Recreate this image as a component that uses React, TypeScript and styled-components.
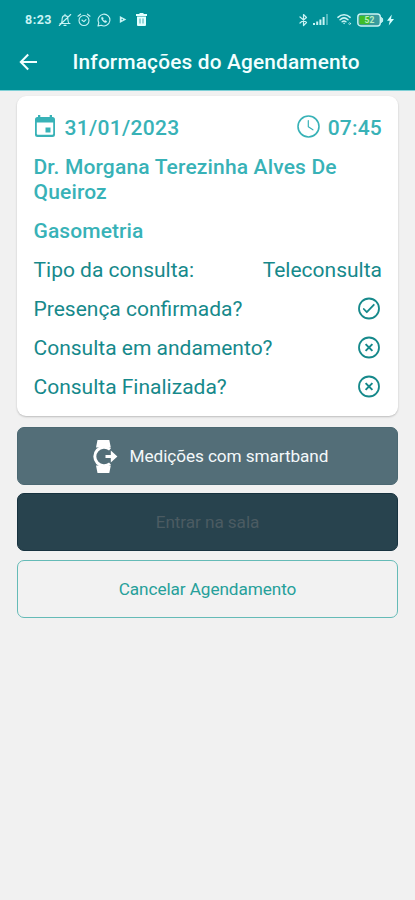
import React from "react";
import styled, { createGlobalStyle } from "styled-components";

const GlobalStyle = createGlobalStyle`
  * { box-sizing: border-box; }
  body { margin: 0; background: #f1f1f1; font-family: Roboto, "Liberation Sans", sans-serif; }
`;

const Screen = styled.main`
  height: 900px;
  background: #f1f1f1;
  overflow: hidden;
`;

const Header = styled.header`
  height: 91px;
  background: #009097;
  border-bottom: 1px solid #7fd0d6;
  color: #f2ffff;
`;

const StatusBar = styled.div`
  height: 39px;
  padding: 0 21px 0 25px;
  display: flex;
  justify-content: space-between;
  align-items: center;
  color: #c9f3f4;
`;

const StatusGroup = styled.div<{ $gap: number }>`
  display: flex;
  align-items: center;
  gap: ${(p) => p.$gap}px;
`;

const StatusItem = styled.span<{ $before?: number; $after?: number }>`
  display: flex;
  margin-left: ${(p) => p.$before ?? 0}px;
  margin-right: ${(p) => p.$after ?? 0}px;
`;

const Clock = styled.span`
  font-size: 12.5px;
  font-weight: 700;
  letter-spacing: 0.5px;
  width: 28px;
`;

const TitleBar = styled.div`
  height: 51px;
  padding: 0 0 6px 19px;
  display: flex;
  align-items: center;
`;

const Title = styled.h1`
  margin: 1px 0 0 34.5px;
  font-size: 20.8px;
  line-height: 26px;
  font-weight: 500;
  letter-spacing: 0.19px;
  white-space: nowrap;
`;

const Content = styled.div`
  padding: 5px 17px 0;
`;

const Card = styled.section`
  height: 320px;
  padding: 20px 16px 0 16.5px;
  background: #fff;
  border-radius: 9px;
  box-shadow: 0 1px 2px rgba(0, 0, 0, 0.22);
  color: #16898b;
`;

const Row = styled.div<{ $before?: number }>`
  height: 24px;
  margin-top: ${(p) => p.$before ?? 14.9}px;
  display: flex;
  align-items: center;
  justify-content: space-between;
  font-size: 21px;
  line-height: 24px;
  white-space: nowrap;
  > svg { margin-right: 2px; }
`;

const DateTime = styled.span<{ $gap: number; $track: number }>`
  display: flex;
  align-items: center;
  gap: ${(p) => p.$gap}px;
  color: #38b2b7;
  font-weight: 500;
  letter-spacing: ${(p) => p.$track}px;
  svg { position: relative; top: -2px; }
`;

const Strong = styled.p<{ $before: number; $track: number }>`
  margin: ${(p) => p.$before}px 0 0;
  color: #38b2b7;
  font-size: 21px;
  line-height: 24.5px;
  font-weight: 500;
  letter-spacing: ${(p) => p.$track}px;
  white-space: nowrap;
`;

const Label = styled.span`
  letter-spacing: 0;
`;

const Actions = styled.div`
  margin-top: 11px;
  display: grid;
  gap: 8.3px;
`;

const Button = styled.button<{ $kind: "band" | "enter" | "cancel" }>`
  height: 58px;
  padding: 0 0 0 ${(p) => (p.$kind === "band" ? 5 : 0)}px;
  display: flex;
  align-items: center;
  justify-content: center;
  gap: 12px;
  border-radius: 7px;
  font: 400 17.2px/24px Roboto, sans-serif;
  letter-spacing: -0.08px;
  border: 1px solid ${(p) => ({ band: "#4b6872", enter: "#17323f", cancel: "#65bbb7" })[p.$kind]};
  background: ${(p) => ({ band: "#536e78", enter: "#28434e", cancel: "#f2f2f2" })[p.$kind]};
  color: ${(p) => ({ band: "#f3f8fa", enter: "#4b5b62", cancel: "#26a09a" })[p.$kind]};
`;

const stroke = { fill: "none", stroke: "currentColor", strokeLinecap: "round", strokeLinejoin: "round" } as const;

const MutedBell = () => (
  <svg width="14" height="14" viewBox="0 0 14 14" {...stroke} strokeWidth="1.1">
    <path d="M2 10.5h10M3.2 10.2c1-1 .8-3 1-4.8.3-1.900 1.300-2.800 2.800-2.800s2.600 1 2.800 2.800c.2 2 .1 3.800 1.100 4.800M6 12.400h2M7 1.300v1.200M1.300 12.500 12.700 1.500" />
  </svg>
);
const Alarm = () => (
  <svg width="14" height="14" viewBox="0 0 14 14" {...stroke} strokeWidth="1.1">
    <circle cx="7" cy="7.500" r="5" />
    <path d="M1 3.200 3.500 1.200M13 3.200l-2.500-2M4.900 7l2 1.700L9 6.600" />
  </svg>
);
const Chat = () => (
  <svg width="14" height="14" viewBox="0 0 14 14" {...stroke} strokeWidth="1.1">
    <path d="m1 13 .8-3.200A5.900 5.900 0 1 1 4.200 12.200z" />
    <path d="M4.800 4.300c-.8.700-.2 2.200 1.100 3.600s3 2.100 3.700 1.200l-.1-1-1.300-.5-.7.500-1.700-1.700.5-.7-.5-1.300z" fill="currentColor" strokeWidth=".5" />
  </svg>
);
const Play = () => (
  <svg width="8" height="9" viewBox="0 0 8 9"><path d="M.8 1 7.300 4.500.8 8z" fill="currentColor" /><circle cx="3.200" cy="4.500" r=".8" fill="#169ba0" /></svg>
);
const Trash = () => (
  <svg width="11" height="13" viewBox="0 0 11 13">
    <path d="M3.500 0h4v1H11v1.900H0V1h3.500zM1 3.500h9v8.200c0 .8-.5 1.300-1.300 1.300H2.300c-.8 0-1.300-.5-1.300-1.300z" fill="#e3ffff" />
    <path d="M4 5.500v5M7 5.500v5" stroke="#199ba0" strokeWidth=".8" />
  </svg>
);
const Bluetooth = () => (
  <svg width="9" height="14" viewBox="0 0 9 14" {...stroke} strokeWidth="1.200"><path d="m1 4 6.500 5.500-3 3V1.500l3 3L1 10" /></svg>
);
const Signal = () => (
  <svg width="16" height="11" viewBox="0 0 16 11" fill="currentColor">
    <path d="M0 9h2v2H0zM3.200 7.500h2V11h-2zM6.400 5.500h2V11h-2zM9.600 3h2v8h-2z" /><path d="M13 0h2v11h-2z" opacity=".4" />
  </svg>
);
const Wifi = () => (
  <svg width="15" height="13" viewBox="0 0 16 13" {...stroke} strokeWidth="1.600">
    <path d="M1 4.200c3.800-3.600 9.200-3.600 13 0M3.300 6.700c2.500-2.300 5.900-2.300 8.400 0M5.500 8.900c1.200-1 2.800-1 4 0" /><path d="m7.500 10.500.1.100" /><circle cx="13.500" cy="10.900" r="1" strokeWidth=".7" />
  </svg>
);
const Battery = () => (
  <svg width="27" height="14" viewBox="0 0 27 14">
    <rect x=".8" y="1" width="22.500" height="12" rx="3" fill="#399b9d" stroke="#c9f3f4" strokeWidth="1.400" />
    <path d="M3.500 2.700h9v8.600h-9a1 1 0 0 1-1-1V3.700a1 1 0 0 1 1-1z" fill="#3fbd28" />
    <path d="M24.300 4.500c1.900 0 1.900 5 0 5z" fill="#c9f3f4" stroke="#c9f3f4" />
    <text x="7.500" y="10.100" fontFamily="Roboto" fontSize="8.500" fontWeight="700" fill="#b9efc0">52</text>
  </svg>
);
const Bolt = () => (
  <svg width="7" height="12" viewBox="0 0 7 12"><path d="M4.800.5 0 6.800h2.800L1.700 11.500 7 4.900H4z" fill="#d8ffff" /></svg>
);
const BackArrow = () => (
  <svg width="19" height="18" viewBox="0 0 19 18" {...stroke} strokeWidth="2" strokeLinecap="butt" strokeLinejoin="miter"><path d="M18 9H2.200M9.200 1.500 1.800 9l7.400 7.500" /></svg>
);
const Calendar = () => (
  <svg width="22" height="23" viewBox="0 0 22 23" fill="currentColor">
    <path fillRule="evenodd" d="M4 0h2.300v2h9.400V0H18v2h.5A2.500 2.500 0 0 1 21 4.500v15a2.500 2.500 0 0 1-2.500 2.500h-15A2.500 2.500 0 0 1 1 19.500v-15A2.500 2.500 0 0 1 3.500 2H4zm-1.200 7.500v11.200a1 1 0 0 0 1 1h14.400a1 1 0 0 0 1-1V7.500z" />
    <path d="M11.500 12.500h5v5h-5z" />
  </svg>
);
const TimeIcon = () => (
  <svg width="23" height="23" viewBox="0 0 23 23" {...stroke} strokeWidth="1.600"><circle cx="11.500" cy="11.500" r="10.500" /><path d="M11.300 5.500v6.300l4.600 3" strokeWidth="1.200" /></svg>
);
const Result = ({ confirmed = false }: { confirmed?: boolean }) => (
  <svg width="22" height="23" viewBox="0 0 22 23" {...stroke} strokeWidth="1.800">
    <circle cx="11" cy="11.500" r="10" />
    {confirmed ? <path d="m5.800 12 3 3.200 7-7.400" /> : <path d="m7.600 8.100 6.800 6.800m0-6.800-6.800 6.800" strokeLinecap="butt" strokeWidth="2" />}
  </svg>
);
const Watch = () => (
  <svg width="26" height="33" viewBox="0 0 26 33" fill="none">
    <path d="M5.500 0h11.800l1.500 7.500H4zM4 25.500h14.800L17.300 33H5.500z" fill="#fff" />
    <circle cx="11.300" cy="16.500" r="9.300" fill="#536e78" />
    <path d="M18 9.300A9.300 9.300 0 1 0 18 23.700" stroke="#fff" strokeWidth="3" />
    <path d="M13.500 15h5.300v-4.600l6.600 6.100-6.600 6.100V18h-5.300z" fill="#fff" />
  </svg>
);

export default function App() {
  return (
    <Screen>
      <GlobalStyle />
      <Header>
        <StatusBar>
          <StatusGroup $gap={5.2}>
            <Clock>8:23</Clock><MutedBell /><Alarm /><Chat />
            <StatusItem $before={3.5}><Play /></StatusItem>
            <StatusItem $before={3.5}><Trash /></StatusItem>
          </StatusGroup>
          <StatusGroup $gap={5}>
            <Bluetooth /><Signal />
            <StatusItem $before={3}><Wifi /></StatusItem>
            <StatusItem $after={-2}><Battery /></StatusItem>
            <Bolt />
          </StatusGroup>
        </StatusBar>
        <TitleBar><BackArrow /><Title>Informações do Agendamento</Title></TitleBar>
      </Header>
      <Content>
        <Card>
          <Row $before={0}>
            <DateTime $gap={9} $track={0.3}><Calendar />31/01/2023</DateTime>
            <DateTime $gap={8} $track={0.2}><TimeIcon />07:45</DateTime>
          </Row>
          <Strong $before={15.2} $track={0.16}>Dr. Morgana Terezinha Alves De<br />Queiroz</Strong>
          <Strong $before={14.5} $track={0.1}>Gasometria</Strong>
          <Row><Label>Tipo da consulta:</Label><Label>Teleconsulta</Label></Row>
          <Row><Label>Presença confirmada?</Label><Result confirmed /></Row>
          <Row><Label>Consulta em andamento?</Label><Result /></Row>
          <Row><Label>Consulta Finalizada?</Label><Result /></Row>
        </Card>
        <Actions>
          <Button $kind="band"><Watch />Medições com smartband</Button>
          <Button $kind="enter" disabled>Entrar na sala</Button>
          <Button $kind="cancel">Cancelar Agendamento</Button>
        </Actions>
      </Content>
    </Screen>
  );
}
